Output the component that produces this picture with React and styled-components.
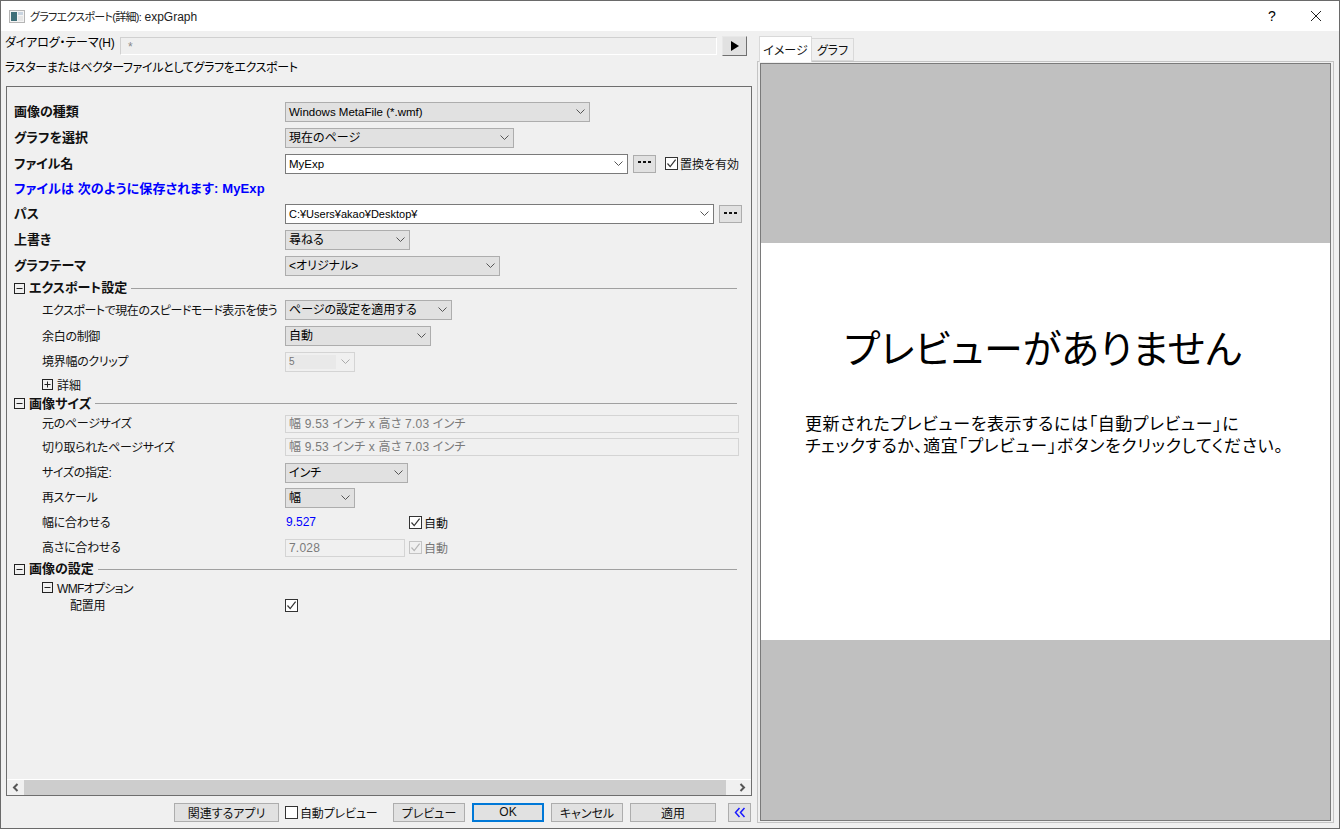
import React from "react";
import styled, { createGlobalStyle, css } from "styled-components";

const GlobalStyle = createGlobalStyle`
  html, body {
    margin: 0;
    padding: 0;
    background: #f0f0f0;
  }
  body {
    font-family: "Liberation Sans", "Noto Sans CJK JP", sans-serif;
    font-size: 12px;
    font-feature-settings: "palt";
    color: #000;
  }
  * {
    box-sizing: border-box;
  }
`;

const Chevron = ({ color = "#555" }) => (
  <ChevronSvg width="9" height="6" viewBox="0 0 9 6">
    <path d="M0.5 0.5 L4.5 4.5 L8.5 0.5" fill="none" stroke={color} strokeWidth="1" />
  </ChevronSvg>
);

const CheckMark = ({ color = "#333" }) => (
  <svg width="11" height="11" viewBox="0 0 11 11">
    <path d="M1.5 5.5 L4.2 8.6 L9.6 1.6" fill="none" stroke={color} strokeWidth="1.2" />
  </svg>
);

const Expander = ({ open = true }) => (
  <ExpanderBox>
    <svg width="11" height="11" viewBox="0 0 11 11">
      <rect x="0.5" y="0.5" width="10" height="10" fill="none" stroke="#222" />
      <path d={open ? "M2.5 5.5 H8.5" : "M2.5 5.5 H8.5 M5.5 2.5 V8.5"} stroke="#222" />
    </svg>
  </ExpanderBox>
);

const Dots = () => (
  <svg width="13" height="3" viewBox="0 0 13 3">
    <path d="M0 0 H3 V2 H0 Z M5 0 H8 V2 H5 Z M10 0 H13 V2 H10 Z" fill="#111" />
  </svg>
);

const Select = ({ width, kind = "plain", size = 12, children }) => (
  <SelectBox $width={width} $kind={kind}>
    <SelectText $kind={kind} $size={size}>{children}</SelectText>
    <Chevron color={kind === "disabled" ? "#aaa" : "#555"} />
  </SelectBox>
);

const Check = ({ checked = true, disabled = false, children }) => (
  <CheckLabel $disabled={disabled}>
    <CheckBox $disabled={disabled}>
      {checked && <CheckMark color={disabled ? "#b5b5b5" : "#333"} />}
    </CheckBox>
    {children}
  </CheckLabel>
);

const Section = ({ title, h }) => (
  <SectionRow $h={h}>
    <Expander />
    <SectionTitle>{title}</SectionTitle>
    <SectionLine />
  </SectionRow>
);

export default function App() {
  return (
    <Window>
      <GlobalStyle />
      <TitleBar>
        <svg width="16" height="13" viewBox="0 0 16 13">
          <rect x="0.5" y="0.5" width="15" height="12" fill="#f4f4f4" stroke="#b5b5b5" />
          <rect x="2" y="2" width="6" height="9" fill="#3f6f78" />
          <rect x="9" y="2" width="5" height="3" fill="#c9d4e0" />
          <rect x="9" y="6" width="5" height="5" fill="#e6e6e6" />
        </svg>
        <TitleText>
          <TitleKana>グラフエクスポート(詳細):</TitleKana> expGraph
        </TitleText>
        <HelpMark>?</HelpMark>
        <CloseMark width="12" height="12" viewBox="0 0 12 12">
          <path d="M1 1 L11 11 M11 1 L1 11" stroke="#222" strokeWidth="1" />
        </CloseMark>
      </TitleBar>

      <Body>
        <LeftColumn>
          <ThemeRow>
            <ThemeLabel>ダイアログ・テーマ(H)</ThemeLabel>
            <ThemeInput>*</ThemeInput>
            <RunButton>
              <svg width="8" height="10" viewBox="0 0 8 10">
                <path d="M0 0 L8 5 L0 10 Z" fill="#000" />
              </svg>
            </RunButton>
          </ThemeRow>
          <Description>ラスターまたはベクターファイルとしてグラフをエクスポート</Description>

          <Panel>
            <Rows>
              <Row $h={26}>
                <StrongLabel>画像の種類</StrongLabel>
                <Select width={305} size={11.5}>Windows MetaFile (*.wmf)</Select>
              </Row>
              <Row $h={26}>
                <StrongLabel>グラフを選択</StrongLabel>
                <Select width={229}>現在のページ</Select>
              </Row>
              <Row $h={25}>
                <StrongLabel>ファイル名</StrongLabel>
                <Controls>
                  <Select width={343} kind="field" size={11.5}>MyExp</Select>
                  <DotsButton $left={5}><Dots /></DotsButton>
                  <CheckSpacer $w={9} />
                  <Check>置換を有効</Check>
                </Controls>
              </Row>
              <SaveNote $h={25}>ファイルは 次のように保存されます: MyExp</SaveNote>
              <Row $h={26}>
                <StrongLabel>パス</StrongLabel>
                <Controls>
                  <Select width={429} kind="field" size={11}>C:¥Users¥akao¥Desktop¥</Select>
                  <DotsButton $left={5}><Dots /></DotsButton>
                </Controls>
              </Row>
              <Row $h={26}>
                <StrongLabel>上書き</StrongLabel>
                <Select width={125}>尋ねる</Select>
              </Row>
              <Row $h={26}>
                <StrongLabel>グラフテーマ</StrongLabel>
                <Select width={215}>&lt;オリジナル&gt;</Select>
              </Row>

              <Section title="エクスポート設定" h={18} />
              <Row $h={26} $indent={1}>
                <Label $track={-0.45}>エクスポートで現在のスピードモード表示を使う</Label>
                <Select width={167}>ページの設定を適用する</Select>
              </Row>
              <Row $h={26} $indent={1}>
                <Label>余白の制御</Label>
                <Select width={146}>自動</Select>
              </Row>
              <Row $h={25} $indent={1}>
                <Label>境界幅のクリップ</Label>
                <Select width={70} kind="disabled">5</Select>
              </Row>
              <TreeRow $h={20}>
                <Expander open={false} />
                <span>詳細</span>
              </TreeRow>

              <Section title="画像サイズ" h={19} />
              <Row $h={21} $indent={1}>
                <Label>元のページサイズ</Label>
                <ReadOnlyField $width={454}>幅 9.53 インチ x 高さ 7.03 インチ</ReadOnlyField>
              </Row>
              <Row $h={26} $indent={1}>
                <Label>切り取られたページサイズ</Label>
                <ReadOnlyField $width={454}>幅 9.53 インチ x 高さ 7.03 インチ</ReadOnlyField>
              </Row>
              <Row $h={25} $indent={1}>
                <Label>サイズの指定:</Label>
                <Select width={123}>インチ</Select>
              </Row>
              <Row $h={25} $indent={1}>
                <Label>再スケール</Label>
                <Select width={70}>幅</Select>
              </Row>
              <Row $h={25} $indent={1}>
                <Label>幅に合わせる</Label>
                <Controls>
                  <BlueValue>9.527</BlueValue>
                  <Check>自動</Check>
                </Controls>
              </Row>
              <Row $h={25} $indent={1}>
                <Label>高さに合わせる</Label>
                <Controls>
                  <ReadOnlyField $width={120}>7.028</ReadOnlyField>
                  <CheckSpacer $w={4} />
                  <Check disabled>自動</Check>
                </Controls>
              </Row>

              <Section title="画像の設定" h={18} />
              <TreeRow $h={18}>
                <Expander />
                <TightText>WMFオプション</TightText>
              </TreeRow>
              <Row $h={18} $indent={2}>
                <Label>配置用</Label>
                <Check />
              </Row>
            </Rows>

            <ScrollBar>
              <ScrollArrow>
                <svg width="7" height="9" viewBox="0 0 7 9">
                  <path d="M5.5 1 L2 4.5 L5.5 8" fill="none" stroke="#555" strokeWidth="2" />
                </svg>
              </ScrollArrow>
              <ScrollTrack />
              <ScrollArrow>
                <svg width="7" height="9" viewBox="0 0 7 9">
                  <path d="M1.5 1 L5 4.5 L1.5 8" fill="none" stroke="#555" strokeWidth="2" />
                </svg>
              </ScrollArrow>
            </ScrollBar>
          </Panel>

          <Footer>
            <PushButton $w={105}>関連するアプリ</PushButton>
            <FooterCheck>
              <Check checked={false}>自動プレビュー</Check>
            </FooterCheck>
            <PushButton $w={72}>プレビュー</PushButton>
            <PushButton $w={72} $primary>OK</PushButton>
            <PushButton $w={72}>キャンセル</PushButton>
            <PushButton $w={86}>適用</PushButton>
            <CollapseButton>
              <svg width="12" height="11" viewBox="0 0 12 11">
                <path
                  d="M5.5 1 L1.5 5.5 L5.5 10 M10.5 1 L6.5 5.5 L10.5 10"
                  fill="none"
                  stroke="#1a1aff"
                  strokeWidth="1.5"
                />
              </svg>
            </CollapseButton>
          </Footer>
        </LeftColumn>

        <RightColumn>
          <Tabs>
            <Tab $active>イメージ</Tab>
            <Tab>グラフ</Tab>
          </Tabs>
          <PreviewFrame>
            <PreviewInner>
              <GreyBand $h={179} />
              <PreviewPage>
                <PreviewTitle>プレビューがありません</PreviewTitle>
                <PreviewText>
                  更新されたプレビューを表示するには「自動プレビュー」に
                  <br />
                  チェックするか、適宜「プレビュー」ボタンをクリックしてください。
                </PreviewText>
              </PreviewPage>
              <GreyBand />
            </PreviewInner>
          </PreviewFrame>
        </RightColumn>
      </Body>
    </Window>
  );
}

const Window = styled.div`
  width: 1340px;
  height: 829px;
  border: 1px solid #6a6a6a;
  display: flex;
  flex-direction: column;
  background: #f0f0f0;
  overflow: hidden;
`;

const TitleBar = styled.div`
  height: 30px;
  background: #fff;
  display: flex;
  align-items: center;
  padding-left: 8px;
  flex-shrink: 0;
`;

const TitleText = styled.div`
  margin-left: 5px;
  flex: 1;
  color: #222;
  white-space: pre;
`;

const TitleKana = styled.span`
  font-size: 11px;
  letter-spacing: -0.7px;
`;

const HelpMark = styled.div`
  width: 14px;
  font-size: 14px;
  text-align: center;
  margin-right: 31px;
`;

const CloseMark = styled.svg`
  margin-right: 17px;
`;

const Body = styled.div`
  flex: 1;
  display: flex;
  min-height: 0;
`;

const LeftColumn = styled.div`
  width: 756px;
  display: flex;
  flex-direction: column;
  padding: 5px 5px 0 5px;
`;

const ThemeRow = styled.div`
  display: flex;
  align-items: flex-start;
  height: 20px;
`;

const ThemeLabel = styled.div`
  width: 115px;
  margin-left: -1px;
  line-height: 14px;
  letter-spacing: -0.15px;
  white-space: nowrap;
`;

const ThemeInput = styled.div`
  width: 597px;
  height: 18px;
  margin-top: 1px;
  border: 1px solid;
  border-color: #d0d0d0 #fff #fff #d0d0d0;
  background: #efefef;
  color: #888;
  padding: 2px 0 0 7px;
  line-height: 14px;
`;

const RunButton = styled.div`
  width: 25px;
  height: 20px;
  margin-left: 5px;
  background: #e1e1e1;
  border: 1px solid;
  border-color: #e8e8e8 #707070 #707070 #e8e8e8;
  display: flex;
  align-items: center;
  justify-content: center;
`;

const Description = styled.div`
  height: 20px;
  margin-top: 4px;
  margin-left: -1px;
  line-height: 16px;
  letter-spacing: -0.35px;
  white-space: nowrap;
`;

const Panel = styled.div`
  width: 746px;
  height: 710px;
  margin-top: 6px;
  border: 1px solid #6e6e6e;
  display: flex;
  flex-direction: column;
`;

const Rows = styled.div`
  flex: 1;
  padding-top: 12px;
  min-height: 0;
`;

const Row = styled.div`
  height: ${(p) => p.$h}px;
  display: grid;
  grid-template-columns: ${(p) => (p.$indent === 2 ? "215px 1fr" : p.$indent ? "243px 1fr" : "272px 1fr")};
  align-items: center;
  padding-left: ${(p) => (p.$indent === 2 ? 63 : p.$indent ? 35 : 6)}px;
`;

const Label = styled.div`
  white-space: nowrap;
  color: #111;
  letter-spacing: ${(p) => p.$track ?? -0.3}px;
  padding-bottom: 2px;
`;

const StrongLabel = styled(Label)`
  font-weight: 700;
  font-size: 13px;
  letter-spacing: 0;
  padding: 0 0 3px 1px;
`;

const Controls = styled.div`
  display: flex;
  align-items: center;
`;

const CheckSpacer = styled.div`
  width: ${(p) => p.$w}px;
`;

const kinds = {
  plain: css`
    background: #e1e1e1;
    border-color: #adadad;
  `,
  field: css`
    background: #fff;
    border-color: #7a7a7a;
  `,
  disabled: css`
    background: #f0f0f0;
    border-color: #d4d4d4;
  `,
};

const SelectBox = styled.div`
  width: ${(p) => p.$width}px;
  height: 20px;
  border: 1px solid;
  ${(p) => kinds[p.$kind]}
  display: flex;
  align-items: center;
  justify-content: space-between;
  padding: 0 4px 0 3px;
`;

const SelectText = styled.div`
  white-space: nowrap;
  line-height: 16px;
  font-size: ${(p) => p.$size}px;
  ${(p) =>
    p.$kind === "disabled" &&
    css`
      color: #777;
      background: #e9e9e9;
      width: 47px;
      height: 14px;
      font-size: 10px;
      line-height: 14px;
    `}
`;

const ChevronSvg = styled.svg`
  flex-shrink: 0;
`;

const DotsButton = styled.div`
  width: 23px;
  height: 18px;
  margin-left: ${(p) => p.$left}px;
  background: #e1e1e1;
  border: 1px solid #adadad;
  display: flex;
  align-items: center;
  justify-content: center;
  padding-bottom: 2px;
`;

const CheckLabel = styled.div`
  display: flex;
  align-items: center;
  gap: 2px;
  white-space: nowrap;
  color: ${(p) => (p.$disabled ? "#777" : "#111")};
`;

const CheckBox = styled.div`
  width: 13px;
  height: 13px;
  border: 1px solid ${(p) => (p.$disabled ? "#c4c4c4" : "#333")};
  background: ${(p) => (p.$disabled ? "#f0f0f0" : "#fff")};
  display: flex;
  align-items: center;
  justify-content: center;
`;

const SaveNote = styled.div`
  height: ${(p) => p.$h}px;
  display: flex;
  align-items: center;
  padding: 0 0 2px 7px;
  color: #0000ff;
  font-weight: 700;
  font-size: 13px;
  letter-spacing: 0.15px;
  white-space: pre;
`;

const ExpanderBox = styled.div`
  width: 11px;
  height: 11px;
  display: flex;
  flex-shrink: 0;
`;

const SectionRow = styled.div`
  height: ${(p) => p.$h}px;
  display: flex;
  align-items: center;
  padding: 0 14px 0 7px;
`;

const SectionTitle = styled.div`
  font-weight: 700;
  font-size: 13px;
  margin-left: 4px;
  padding-bottom: 3px;
  white-space: nowrap;
  color: #111;
`;

const SectionLine = styled.div`
  flex: 1;
  height: 1px;
  margin-left: 4px;
  background: #a0a0a0;
`;

const TreeRow = styled.div`
  height: ${(p) => p.$h}px;
  display: flex;
  align-items: center;
  gap: 4px;
  padding-left: 35px;
  color: #111;
`;

const TightText = styled.span`
  letter-spacing: -0.7px;
`;

const ReadOnlyField = styled.div`
  width: ${(p) => p.$width}px;
  height: 18px;
  border: 1px solid #d4d4d4;
  background: #f0f0f0;
  color: #7a7a7a;
  padding-left: 3px;
  line-height: 16px;
  letter-spacing: 0.2px;
  white-space: nowrap;
`;

const BlueValue = styled.div`
  width: 124px;
  padding: 0 0 2px 1px;
  color: #0000ff;
`;

const ScrollBar = styled.div`
  height: 16px;
  display: flex;
  border-top: 1px solid #fff;
  background: #f0f0f0;
`;

const ScrollArrow = styled.div`
  width: 17px;
  display: flex;
  align-items: center;
  justify-content: center;
  flex-shrink: 0;
`;

const ScrollTrack = styled.div`
  flex: 1;
  margin-right: 8px;
  background: #cdcdcd;
`;

const Footer = styled.div`
  height: 32px;
  display: flex;
  align-items: flex-start;
  justify-content: flex-end;
  padding: 7px 1px 0 0;
  gap: 7px;
`;

const FooterCheck = styled.div`
  width: 101px;
  height: 19px;
  display: flex;
  align-items: center;
  margin-left: -1px;
  letter-spacing: -0.15px;
  color: #111;
`;

const PushButton = styled.div`
  width: ${(p) => p.$w}px;
  height: 19px;
  background: #e1e1e1;
  border: ${(p) => (p.$primary ? "2px solid #0078d7" : "1px solid #adadad")};
  display: flex;
  align-items: center;
  justify-content: center;
  padding-bottom: 1px;
  color: #111;
`;

const CollapseButton = styled.div`
  width: 23px;
  height: 19px;
  margin-left: 5px;
  background: #e1e1e1;
  border: 1px solid #adadad;
  display: flex;
  align-items: center;
  justify-content: center;
`;

const RightColumn = styled.div`
  flex: 1;
  display: flex;
  flex-direction: column;
  padding: 5px 5px 5px 0;
  min-width: 0;
`;

const Tabs = styled.div`
  display: flex;
  align-items: flex-end;
  height: 26px;
  padding-left: 2px;
  margin-bottom: -1px;
  position: relative;
  z-index: 1;
`;

const Tab = styled.div`
  height: ${(p) => (p.$active ? 26 : 23)}px;
  width: ${(p) => (p.$active ? 53 : 42)}px;
  margin-bottom: ${(p) => (p.$active ? 0 : 1)}px;
  display: flex;
  align-items: center;
  justify-content: center;
  padding-bottom: 1px;
  background: ${(p) => (p.$active ? "#fff" : "#f0f0f0")};
  border: 1px solid #d9d9d9;
  border-bottom: ${(p) => (p.$active ? "none" : "1px solid #d9d9d9")};
  border-left: ${(p) => (p.$active ? "1px solid #d9d9d9" : "none")};
  color: #111;
`;

const PreviewFrame = styled.div`
  flex: 1;
  border: 1px solid #c4c4c4;
  padding: 1px 2px;
  background: #f0f0f0;
  display: flex;
  min-height: 0;
`;

const PreviewInner = styled.div`
  flex: 1;
  border: 1px solid #7a7a7a;
  display: flex;
  flex-direction: column;
  min-width: 0;
`;

const GreyBand = styled.div`
  ${(p) => (p.$h ? `height: ${p.$h}px;` : "flex: 1;")}
  background: #c0c0c0;
`;

const PreviewPage = styled.div`
  height: 397px;
  background: #fff;
  display: flex;
  flex-direction: column;
  padding-top: 78px;
`;

const PreviewTitle = styled.div`
  font-size: 39px;
  line-height: 58px;
  letter-spacing: 0.3px;
  text-align: center;
  color: #000;
  padding-right: 5px;
`;

const PreviewText = styled.div`
  margin-top: 35px;
  margin-left: 44px;
  font-size: 17px;
  line-height: 22px;
  letter-spacing: 0.6px;
  white-space: nowrap;
  color: #000;
`;
